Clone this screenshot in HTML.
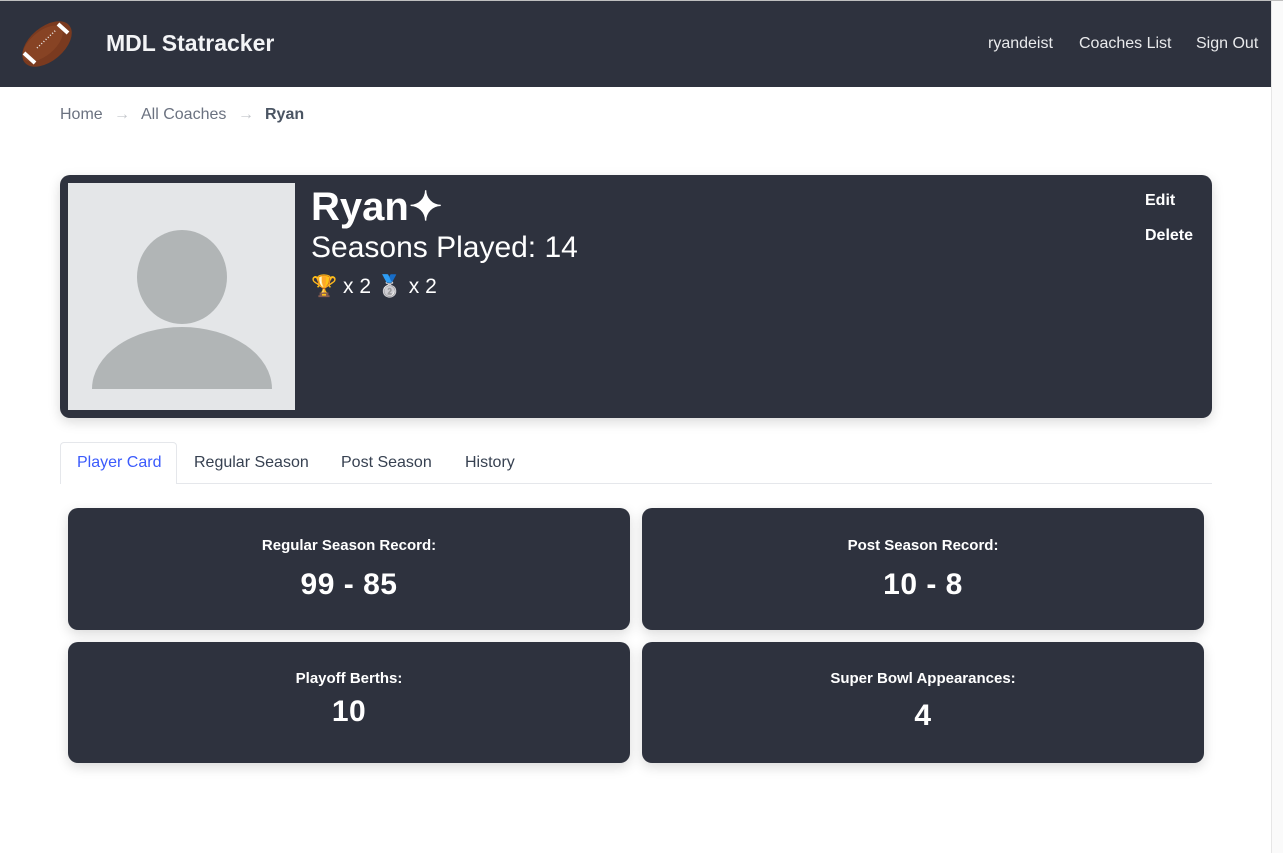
<!DOCTYPE html>
<html><head><meta charset="utf-8"><style>
*{box-sizing:border-box;margin:0;padding:0}
body{width:1283px;height:853px;background:#fff;font-family:"Liberation Sans",sans-serif;position:relative;overflow:hidden}
.abs{position:absolute}
.hdr{left:0;top:1px;width:1271px;height:86px;background:#2e323e}
.topline{left:0;top:0;width:1283px;height:1px;background:#bfbfbf}
.side{left:1271px;top:1px;width:12px;height:852px;background:#fafafa;border-left:1px solid #e6e6e6}
.nav{color:#e9eaec;font-size:16px;top:35px}
.crumb{top:106px;font-size:16px;color:#6b7280}
.card{background:#2e323e;border-radius:10px;color:#fff;box-shadow:0 4px 12px rgba(0,0,0,.15)}
.stat{text-align:center;font-weight:bold}
.stat .n{font-size:30px;letter-spacing:.5px}
.tab{top:454px;font-size:16px;color:#374151}
</style></head><body>
<div class="abs topline"></div>
<div class="abs hdr"></div>
<div class="abs side"></div>
<svg class="abs" style="left:20px;top:18px" width="54" height="52" viewBox="0 0 54 52">
<ellipse cx="27" cy="26" rx="29" ry="17" transform="rotate(-40 27 26)" fill="#7a3a1f"/>
<ellipse cx="24" cy="23" rx="24" ry="12" transform="rotate(-40 27 26)" fill="#8f4a28" opacity=".6"/>
<path d="M38 6 L48 15" stroke="#fff" stroke-width="4"/>
<path d="M4 35 L15 45" stroke="#fff" stroke-width="4"/>
<path d="M17 30 L36 12" stroke="#eee" stroke-width="1.5" stroke-dasharray="1 2"/>
</svg>
<div class="abs" style="left:106px;top:30px;font-size:23px;font-weight:bold;color:#f3f4f6">MDL Statracker</div>
<div class="abs nav" style="left:988px">ryandeist</div>
<div class="abs nav" style="left:1079px">Coaches List</div>
<div class="abs nav" style="left:1196px">Sign Out</div>
<div class="abs crumb" style="left:60px">Home</div>
<div class="abs crumb" style="left:114px;color:#c4c7cc">→</div>
<div class="abs crumb" style="left:141px">All Coaches</div>
<div class="abs crumb" style="left:238px;color:#c4c7cc">→</div>
<div class="abs crumb" style="left:265px;font-weight:bold;color:#4b5563">Ryan</div>
<div class="abs card" style="left:60px;top:175px;width:1152px;height:243px"></div>
<div class="abs" style="left:68px;top:183px;width:227px;height:227px;background:#e4e6e8;overflow:hidden">
<div class="abs" style="left:69px;top:47px;width:90px;height:94px;border-radius:50%;background:#b1b5b6"></div>
<div class="abs" style="left:24px;top:144px;width:180px;height:140px;border-radius:50%/62px;background:#b1b5b6"></div>
<div class="abs" style="left:0;top:206px;width:227px;height:21px;background:#e4e6e8"></div>
</div>
<div class="abs" style="left:311px;top:184px;font-size:40px;font-weight:bold;color:#fff">Ryan✦</div>
<div class="abs" style="left:311px;top:231px;font-size:30px;color:#fff">Seasons Played: 14</div>
<div class="abs" style="left:311px;top:275px;font-size:21px;color:#fff">🏆 x 2 🥈 x 2</div>
<div class="abs" style="left:1145px;top:192px;font-size:16px;font-weight:bold;color:#fff">Edit</div>
<div class="abs" style="left:1145px;top:227px;font-size:16px;font-weight:bold;color:#fff">Delete</div>
<div class="abs" style="left:60px;top:483px;width:1152px;height:1px;background:#e5e7eb"></div>
<div class="abs" style="left:60px;top:442px;width:117px;height:42px;background:#fff;border:1px solid #e5e7eb;border-bottom:none;border-radius:4px 4px 0 0"></div>
<div class="abs tab" style="left:77px;color:#3b5bfc">Player Card</div>
<div class="abs tab" style="left:194px">Regular Season</div>
<div class="abs tab" style="left:341px">Post Season</div>
<div class="abs tab" style="left:465px">History</div>
<div class="abs card stat" style="left:68px;top:508px;width:562px;height:122px"><div style="margin-top:29px;font-size:15px">Regular Season Record:</div><div class="n" style="margin-top:14px">99 - 85</div></div>
<div class="abs card stat" style="left:642px;top:508px;width:562px;height:122px"><div style="margin-top:29px;font-size:15px">Post Season Record:</div><div class="n" style="margin-top:14px">10 - 8</div></div>
<div class="abs card stat" style="left:68px;top:642px;width:562px;height:121px"><div style="margin-top:28px;font-size:15px">Playoff Berths:</div><div class="n" style="margin-top:8px">10</div></div>
<div class="abs card stat" style="left:642px;top:642px;width:562px;height:121px"><div style="margin-top:28px;font-size:15px">Super Bowl Appearances:</div><div class="n" style="margin-top:12px">4</div></div>
</body></html>
